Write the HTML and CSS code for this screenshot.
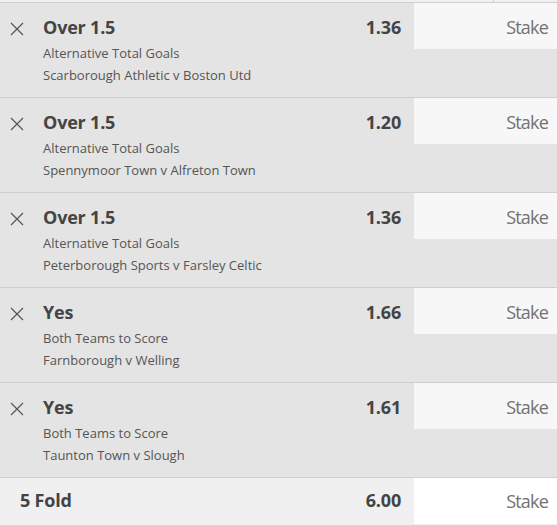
FILE: index.html
```html
<!DOCTYPE html>
<html lang="en">
<head>
    <meta charset="UTF-8">
    <title>Bet Slip</title>
    <link rel="stylesheet" href="styles.css">
</head>
<body>
    <div class="slip">
        <div class="top-strip"><div class="top-cell"></div></div>

        <div class="bet">
            <div class="remove"><svg width="14" height="14" viewBox="0 0 14 14"><path d="M1 1L13 13M13 1L1 13" stroke="#555" stroke-width="1.2"/></svg></div>
            <div class="info">
                <div class="title">Over 1.5</div>
                <div class="sub">Alternative Total Goals</div>
                <div class="sub">Scarborough Athletic v Boston Utd</div>
            </div>
            <div class="odds">1.36</div>
            <div class="stake">Stake</div>
        </div>

        <div class="bet">
            <div class="remove"><svg width="14" height="14" viewBox="0 0 14 14"><path d="M1 1L13 13M13 1L1 13" stroke="#555" stroke-width="1.2"/></svg></div>
            <div class="info">
                <div class="title">Over 1.5</div>
                <div class="sub">Alternative Total Goals</div>
                <div class="sub">Spennymoor Town v Alfreton Town</div>
            </div>
            <div class="odds">1.20</div>
            <div class="stake">Stake</div>
        </div>

        <div class="bet">
            <div class="remove"><svg width="14" height="14" viewBox="0 0 14 14"><path d="M1 1L13 13M13 1L1 13" stroke="#555" stroke-width="1.2"/></svg></div>
            <div class="info">
                <div class="title">Over 1.5</div>
                <div class="sub">Alternative Total Goals</div>
                <div class="sub">Peterborough Sports v Farsley Celtic</div>
            </div>
            <div class="odds">1.36</div>
            <div class="stake">Stake</div>
        </div>

        <div class="bet">
            <div class="remove"><svg width="14" height="14" viewBox="0 0 14 14"><path d="M1 1L13 13M13 1L1 13" stroke="#555" stroke-width="1.2"/></svg></div>
            <div class="info">
                <div class="title">Yes</div>
                <div class="sub">Both Teams to Score</div>
                <div class="sub">Farnborough v Welling</div>
            </div>
            <div class="odds">1.66</div>
            <div class="stake">Stake</div>
        </div>

        <div class="bet">
            <div class="remove"><svg width="14" height="14" viewBox="0 0 14 14"><path d="M1 1L13 13M13 1L1 13" stroke="#555" stroke-width="1.2"/></svg></div>
            <div class="info">
                <div class="title">Yes</div>
                <div class="sub">Both Teams to Score</div>
                <div class="sub">Taunton Town v Slough</div>
            </div>
            <div class="odds">1.61</div>
            <div class="stake">Stake</div>
        </div>

        <div class="bet multiple">
            <div class="fold">5 Fold</div>
            <div class="odds">6.00</div>
            <div class="stake">Stake</div>
        </div>
    </div>
</body>
</html>
```

FILE: styles.css
```css
body {
    margin: 0;
    background: #f0f0f0;
    font-family: 'Open Sans', 'Noto Sans', sans-serif;
    color: #444;
}
.slip {
    width: 557px;
}
.top-strip {
    height: 2px;
    background: #f0f0f0;
}
.top-cell {
    width: 493px;
    height: 2px;
    border-right: 1px solid #d0d0d0;
}
.bet {
    display: flex;
    align-items: flex-start;
    height: 94px;
    border-top: 1px solid #cfcfcf;
    background: #e4e4e4;
}
.remove {
    width: 43px;
    padding-top: 19px;
    padding-left: 10px;
    box-sizing: border-box;
    line-height: 0;
}
.info {
    flex: 1;
    padding-top: 11px;
}
.title {
    font-size: 18px;
    font-weight: 700;
    line-height: 26px;
    letter-spacing: -0.2px;
    color: #444;
    margin-bottom: 2px;
}
.sub {
    font-size: 13px;
    line-height: 22px;
    color: #555;
}
.odds {
    font-size: 18px;
    font-weight: 700;
    line-height: 26px;
    letter-spacing: -0.2px;
    padding-top: 11px;
    padding-right: 13px;
    color: #444;
}
.stake {
    width: 143px;
    height: 46px;
    box-sizing: border-box;
    padding-right: 9px;
    background: #f7f7f7;
    font-size: 18px;
    line-height: 48px;
    letter-spacing: -0.8px;
    text-align: right;
    color: #727272;
}
.multiple {
    height: 48px;
    background: #f0f0f0;
}
.multiple .fold {
    flex: 1;
    padding-left: 20px;
    padding-top: 9px;
    font-size: 18px;
    font-weight: 700;
    line-height: 26px;
    letter-spacing: -0.2px;
}
.multiple .odds {
    padding-top: 9px;
}
.multiple .stake {
    background: #fff;
    line-height: 46px;
}
```
